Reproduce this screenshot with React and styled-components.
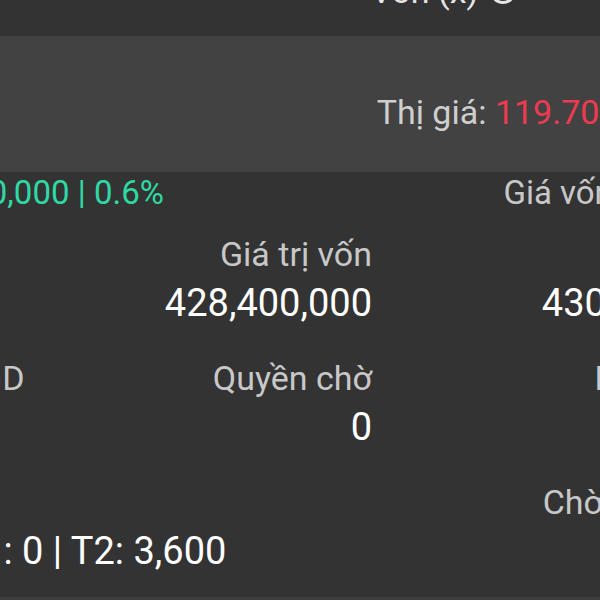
import React from 'react';
import styled, { createGlobalStyle } from 'styled-components';

const GlobalStyle = createGlobalStyle`
  html, body {
    margin: 0;
    padding: 0;
    background: #333333;
  }
  body {
    font-family: Roboto, "Noto Sans", sans-serif;
  }
`;

const Viewport = styled.div`
  width: 600px;
  height: 600px;
  overflow: hidden;
  background: #333333;
`;

// the phone screen is wider than the visible window, so it is shifted left
const Screen = styled.div`
  width: 933px;
  margin-left: -168px;
  display: flex;
  flex-direction: column;
`;

const TopBar = styled.div`
  height: 36px;
  background: #333333;
  display: flex;
  justify-content: center;
  align-items: flex-start;
  overflow: hidden;
`;

const Title = styled.div`
  margin-top: -28px;
  margin-left: 290px;
  display: flex;
  align-items: center;
  gap: 12px;
  color: #e6e6e6;
  font-size: 34px;
  line-height: 38px;
  white-space: nowrap;
`;

const InfoIcon = styled.span`
  width: 20px;
  height: 20px;
  border: 3px solid #e6e6e6;
  border-radius: 50%;
`;

const PriceBand = styled.div`
  height: 136px;
  box-sizing: border-box;
  padding: 16px 58px 0 16px;
  background: #424242;
  display: flex;
  justify-content: space-between;
  align-items: center;
`;

const Symbol = styled.div`
  color: #ffffff;
  font-size: 40px;
  font-weight: 500;
`;

const Price = styled.div`
  font-size: 34px;
  line-height: 40px;
  color: #cfcfcf;
  white-space: nowrap;
`;

const Tone = styled.span`
  color: ${p => p.$tone === 'up' ? '#2fd9a3' : p.$tone === 'down' ? '#ec3b50' : 'inherit'};
`;

const Body = styled.div`
  height: 428px;
  box-sizing: border-box;
  padding: 0 16px;
  background: #333333;
  border-bottom: 3px solid #3d3d3d;
`;

const HeaderRow = styled.div`
  height: 40px;
  padding-top: 2px;
  box-sizing: border-box;
  display: flex;
  justify-content: space-between;
  font-size: 33px;
  line-height: 38px;
  color: #c8c8c8;
  white-space: nowrap;
`;

const Grid = styled.div`
  display: grid;
  grid-template-columns: 260px 264px 1fr;
`;

const Cell = styled.div`
  padding: 22px 0 10px;
  display: flex;
  flex-direction: column;
  align-items: ${p => p.$align === 'left' ? 'flex-start' : 'flex-end'};
  white-space: nowrap;
  min-width: 0;
`;

const Label = styled.div`
  color: #c8c8c8;
  font-size: 34px;
  line-height: 40px;
`;

const Value = styled.div`
  margin-top: 6px;
  color: #ffffff;
  font-size: 38px;
  line-height: 46px;
`;

const stats = [
  { label: 'Tổng KL', value: '3,600', align: 'left' },
  { label: 'Giá trị vốn', value: '428,400,000' },
  { label: 'Giá trị TT', value: '430,920,000' },
  { label: 'KL khớp GD', value: '0', align: 'left' },
  { label: 'Quyền chờ', value: '0' },
  { label: 'Phong tỏa', value: '0' },
  { label: 'Chờ về', value: 'T0: 0 | T1: 0 | T2: 3,600', align: 'left' },
  { label: '', value: '' },
  { label: 'Chờ giao dịch', value: '0' },
];

export default function App() {
  return (
    <Viewport>
      <GlobalStyle />
      <Screen>
        <TopBar>
          <Title>
            Vốn (x)
            <InfoIcon />
          </Title>
        </TopBar>
        <PriceBand>
          <Symbol>HPG</Symbol>
          <Price>
            Thị giá: <Tone $tone="down">119.70 (-0.30)</Tone>
          </Price>
        </PriceBand>
        <Body>
          <HeaderRow>
            <span>
              Lãi: <Tone $tone="up">+2,400,000 | 0.6%</Tone>
            </span>
            <span>Giá vốn: 119.000</span>
          </HeaderRow>
          <Grid>
            {stats.map((s, i) => (
              <Cell key={i} $align={s.align}>
                <Label>{s.label || '\u00a0'}</Label>
                <Value>{s.value || '\u00a0'}</Value>
              </Cell>
            ))}
          </Grid>
        </Body>
      </Screen>
    </Viewport>
  );
}
